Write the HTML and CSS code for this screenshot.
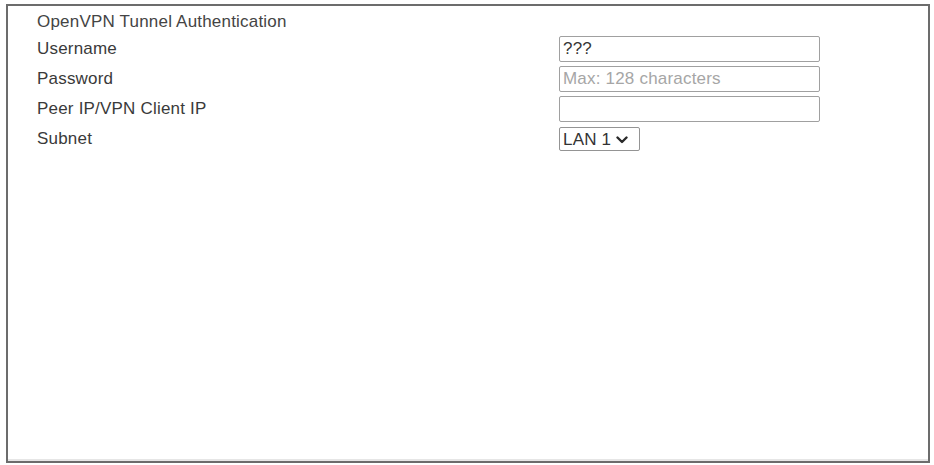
FILE: index.html
```html
<!DOCTYPE html>
<html lang="en">
<head>
<meta charset="utf-8">
<title>OpenVPN Tunnel Authentication</title>
<link rel="stylesheet" href="styles.css">
</head>
<body>
  <div class="panel">
    <div class="section-title">OpenVPN Tunnel Authentication</div>
    <div class="form-grid">
      <label class="field-label" for="username">Username</label>
      <input class="text-input" id="username" type="text" value="???">

      <label class="field-label" for="password">Password</label>
      <input class="text-input" id="password" type="password" placeholder="Max: 128 characters">

      <label class="field-label" for="peer-ip">Peer IP/VPN Client IP</label>
      <input class="text-input" id="peer-ip" type="text">

      <label class="field-label" for="subnet">Subnet</label>
      <div class="select-wrap">
        <select class="select-input" id="subnet">
          <option>LAN 1</option>
          <option>LAN 2</option>
        </select>
        <svg class="select-arrow" width="12" height="8" viewBox="0 0 12 8" aria-hidden="true">
          <path d="M1.5 1.5 L6 6 L10.5 1.5" fill="none" stroke="#2a2a2a" stroke-width="2.4" stroke-linecap="round" stroke-linejoin="round"/>
        </svg>
      </div>
    </div>
  </div>
</body>
</html>
```

FILE: styles.css
```css
* {
  box-sizing: border-box;
}

html, body {
  margin: 0;
  padding: 0;
  background: #ffffff;
}

body {
  font-family: "Liberation Sans", Arial, sans-serif;
  font-size: 17px;
  letter-spacing: 0.2px;
  color: #3c3c3c;
  padding: 4px 4px 2px 6px;
  height: 465px;
}

.panel {
  height: 459px;
  border: 2px solid #6c6c6c;
  box-shadow: inset 0 -2px 0 #e6e6e6;
  padding: 2px 0 0 29px;
}

.section-title {
  height: 28px;
  line-height: 28px;
  color: #444444;
}

.form-grid {
  display: grid;
  grid-template-columns: 522px 261px;
  grid-auto-rows: 26px;
  row-gap: 4px;
  align-items: center;
}

.field-label {
  line-height: 26px;
  color: #3a3a3a;
}

.text-input {
  width: 261px;
  height: 26px;
  border: 1px solid #a0a0a0;
  border-radius: 2px;
  padding: 0 3px;
  font: inherit;
  letter-spacing: 0.2px;
  color: #363636;
  background: #ffffff;
  outline: none;
}

.text-input::placeholder {
  color: #a6a6a6;
  opacity: 1;
}

.select-wrap {
  position: relative;
  width: 81px;
  height: 24px;
}

.select-input {
  -webkit-appearance: none;
  appearance: none;
  width: 81px;
  height: 24px;
  border: 1px solid #949494;
  border-radius: 2px;
  padding: 0 0 0 3px;
  font: inherit;
  letter-spacing: 0.2px;
  color: #333333;
  background: #ffffff;
  outline: none;
}

.select-arrow {
  position: absolute;
  left: 57px;
  top: 9px;
  pointer-events: none;
}
```
